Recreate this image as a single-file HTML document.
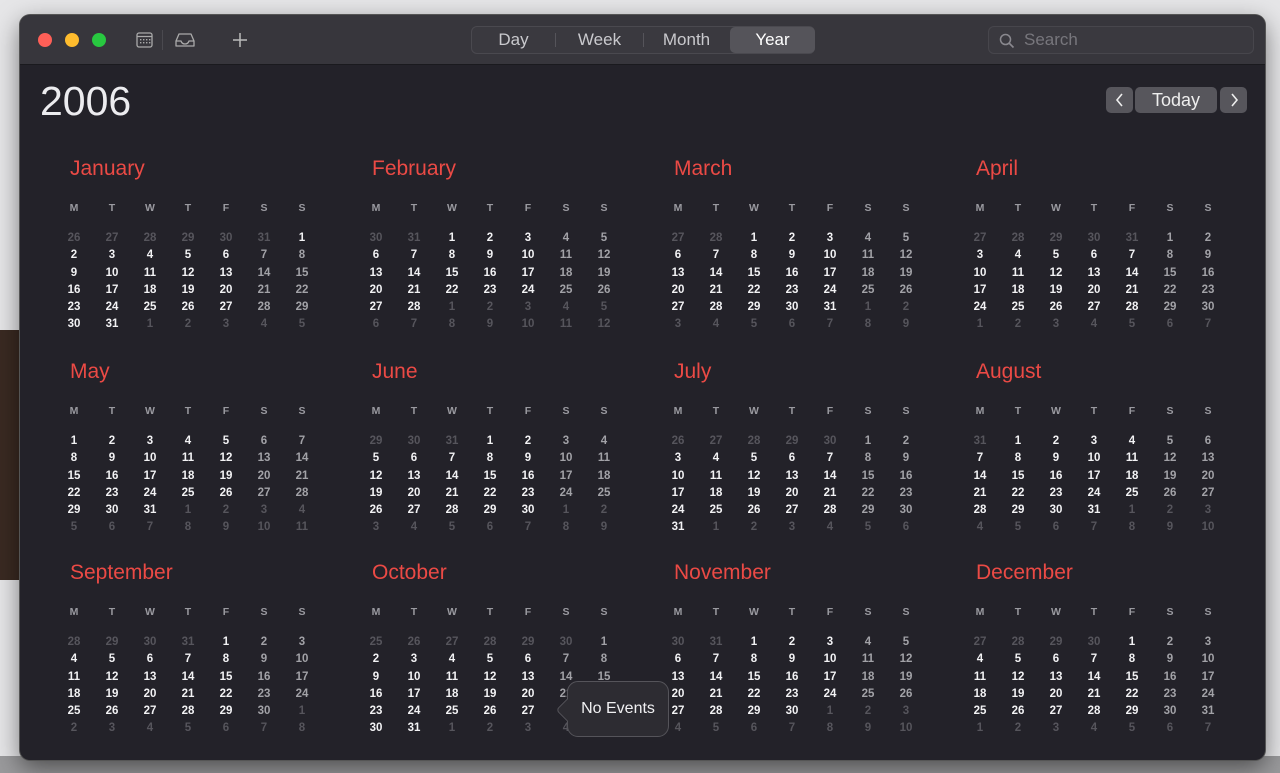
<!DOCTYPE html>
<html><head><meta charset="utf-8"><style>
*{margin:0;padding:0;box-sizing:border-box}
i{font-style:normal}
body{width:1280px;height:773px;overflow:hidden;background:#e6e6e8;font-family:"Liberation Sans",sans-serif;position:relative}
.bot{position:absolute;left:0;top:756px;width:1280px;height:17px;background:#9a9a9c}
.lft{position:absolute;left:0;top:330px;width:20px;height:250px;background:#3a2a22}
.win{position:absolute;left:20px;top:15px;width:1245px;height:745px;background:#232229;border-radius:10px;overflow:hidden;box-shadow:0 0 0 1px #555,0 8px 25px rgba(0,0,0,.5)}
.tb{position:absolute;left:0;top:0;width:1245px;height:50px;background:#37363c;border-bottom:1px solid #1a1a1e}
.dot{position:absolute;top:18px;width:14px;height:14px;border-radius:50%}
.seg{position:absolute;left:451px;top:11px;width:344px;height:28px;border:1px solid #4a494f;border-radius:6px;background:#3a393f}
.seg span{position:absolute;top:0;height:26px;line-height:26px;text-align:center;color:#c9c9cd;font-size:17px}
.srch{position:absolute;left:968px;top:11px;width:266px;height:28px;border:1px solid #47464c;border-radius:6px;background:#3a393f;color:#77767c;font-size:17px;line-height:26px;padding-left:35px}
.yr{position:absolute;left:20px;top:63px;font-size:41px;color:#ececef;font-weight:300}
.nb{position:absolute;top:72px;height:26px;background:#57565c;border-radius:5px;color:#eee;text-align:center;line-height:26px;font-size:18px}
.m{position:absolute;width:266px}
.m h3{font-weight:normal;color:#eb4a45;font-size:21px;padding-left:15px;height:24px;line-height:24px;margin-top:1px}
.g{display:grid;grid-template-columns:repeat(7,38px);text-align:center}
.h{margin-top:21px;color:#9a9aa0;font-size:10.5px;font-weight:bold;height:12px;line-height:12px;margin-bottom:16px}
.d{font-size:11.5px;font-weight:bold;color:#f2f2f4;line-height:17.3px}
.d i:nth-child(7n),.d i:nth-child(7n+6){color:#a2a2a7}
.d i.o{color:#56555c}
.tip{position:absolute;left:547px;top:666px;width:102px;height:56px;background:#2d2c32;border:1px solid #55545a;border-radius:11px;color:#f0f0f2;font-size:16px;line-height:54px;text-align:center}
.arr{position:absolute;left:-9px;top:20px;width:16px;height:16px;background:#2d2c32;border-left:1px solid #55545a;border-bottom:1px solid #55545a;transform:rotate(45deg);border-radius:0 0 0 4px}
</style></head><body>
<div class="lft"></div>
<div class="bot"></div>
<div class="win">
<div class="tb">
<div class="dot" style="left:18px;background:#fe5f57"></div>
<div class="dot" style="left:45px;background:#febc2e"></div>
<div class="dot" style="left:72px;background:#28c840"></div>
<svg style="position:absolute;left:116px;top:17px" width="18" height="16" viewBox="0 0 18 16"><rect x="1" y="1" width="15" height="14" rx="2" fill="none" stroke="#aaa" stroke-width="1.3"/><line x1="1" y1="4.5" x2="16" y2="4.5" stroke="#aaa" stroke-width="1.3"/><g fill="#aaa"><rect x="4" y="7" width="1.4" height="1.4"/><rect x="7" y="7" width="1.4" height="1.4"/><rect x="10" y="7" width="1.4" height="1.4"/><rect x="13" y="7" width="1.4" height="1.4"/><rect x="4" y="10" width="1.4" height="1.4"/><rect x="7" y="10" width="1.4" height="1.4"/><rect x="10" y="10" width="1.4" height="1.4"/><rect x="13" y="10" width="1.4" height="1.4"/></g></svg>
<div style="position:absolute;left:142px;top:15px;width:1px;height:20px;background:#4a494f"></div>
<svg style="position:absolute;left:155px;top:17px" width="20" height="16" viewBox="0 0 20 16"><path d="M1 9 L4 2 H16 L19 9 V14 H1 Z M1 9 H6 Q7 12 10 12 Q13 12 14 9 H19" fill="none" stroke="#aaa" stroke-width="1.3" stroke-linejoin="round"/></svg>
<svg style="position:absolute;left:212px;top:17px" width="16" height="16" viewBox="0 0 16 16"><path d="M8 1V15M1 8H15" stroke="#bbb" stroke-width="1.5"/></svg>
<div class="seg">
<span style="left:0;width:83px">Day</span>
<div style="position:absolute;left:83px;top:6px;width:1px;height:14px;background:#55545a"></div>
<span style="left:84px;width:87px">Week</span>
<div style="position:absolute;left:171px;top:6px;width:1px;height:14px;background:#55545a"></div>
<span style="left:172px;width:85px">Month</span>
<span style="left:258px;width:85px;background:#55545a;border-radius:5px;color:#fff">Year</span>
</div>
<div class="srch">Search<svg style="position:absolute;left:10px;top:6px" width="16" height="16" viewBox="0 0 16 16"><circle cx="6.5" cy="6.5" r="5" fill="none" stroke="#8a898f" stroke-width="1.5"/><path d="M10 10L14.5 14.5" stroke="#8a898f" stroke-width="1.6"/></svg></div>
</div>
<div class="yr">2006</div>
<div class="nb" style="left:1086px;width:27px"><svg width="10" height="14" viewBox="0 0 10 14" style="margin-top:6px"><path d="M7 1L2 7L7 13" fill="none" stroke="#eee" stroke-width="1.6"/></svg></div>
<div class="nb" style="left:1115px;width:82px">Today</div>
<div class="nb" style="left:1200px;width:27px"><svg width="10" height="14" viewBox="0 0 10 14" style="margin-top:6px"><path d="M3 1L8 7L3 13" fill="none" stroke="#eee" stroke-width="1.6"/></svg></div>

<div class="m" style="left:35px;top:141px"><h3>January</h3><div class="g h"><i>M</i><i>T</i><i>W</i><i>T</i><i>F</i><i>S</i><i>S</i></div><div class="g d"><i class="o">26</i><i class="o">27</i><i class="o">28</i><i class="o">29</i><i class="o">30</i><i class="o">31</i><i style="color:#f2f2f4">1</i><i>2</i><i>3</i><i>4</i><i>5</i><i>6</i><i>7</i><i>8</i><i>9</i><i>10</i><i>11</i><i>12</i><i>13</i><i>14</i><i>15</i><i>16</i><i>17</i><i>18</i><i>19</i><i>20</i><i>21</i><i>22</i><i>23</i><i>24</i><i>25</i><i>26</i><i>27</i><i>28</i><i>29</i><i>30</i><i>31</i><i class="o">1</i><i class="o">2</i><i class="o">3</i><i class="o">4</i><i class="o">5</i></div></div>

<div class="m" style="left:337px;top:141px"><h3>February</h3><div class="g h"><i>M</i><i>T</i><i>W</i><i>T</i><i>F</i><i>S</i><i>S</i></div><div class="g d"><i class="o">30</i><i class="o">31</i><i>1</i><i>2</i><i>3</i><i>4</i><i>5</i><i>6</i><i>7</i><i>8</i><i>9</i><i>10</i><i>11</i><i>12</i><i>13</i><i>14</i><i>15</i><i>16</i><i>17</i><i>18</i><i>19</i><i>20</i><i>21</i><i>22</i><i>23</i><i>24</i><i>25</i><i>26</i><i>27</i><i>28</i><i class="o">1</i><i class="o">2</i><i class="o">3</i><i class="o">4</i><i class="o">5</i><i class="o">6</i><i class="o">7</i><i class="o">8</i><i class="o">9</i><i class="o">10</i><i class="o">11</i><i class="o">12</i></div></div>

<div class="m" style="left:639px;top:141px"><h3>March</h3><div class="g h"><i>M</i><i>T</i><i>W</i><i>T</i><i>F</i><i>S</i><i>S</i></div><div class="g d"><i class="o">27</i><i class="o">28</i><i>1</i><i>2</i><i>3</i><i>4</i><i>5</i><i>6</i><i>7</i><i>8</i><i>9</i><i>10</i><i>11</i><i>12</i><i>13</i><i>14</i><i>15</i><i>16</i><i>17</i><i>18</i><i>19</i><i>20</i><i>21</i><i>22</i><i>23</i><i>24</i><i>25</i><i>26</i><i>27</i><i>28</i><i>29</i><i>30</i><i>31</i><i class="o">1</i><i class="o">2</i><i class="o">3</i><i class="o">4</i><i class="o">5</i><i class="o">6</i><i class="o">7</i><i class="o">8</i><i class="o">9</i></div></div>

<div class="m" style="left:941px;top:141px"><h3>April</h3><div class="g h"><i>M</i><i>T</i><i>W</i><i>T</i><i>F</i><i>S</i><i>S</i></div><div class="g d"><i class="o">27</i><i class="o">28</i><i class="o">29</i><i class="o">30</i><i class="o">31</i><i>1</i><i>2</i><i>3</i><i>4</i><i>5</i><i>6</i><i>7</i><i>8</i><i>9</i><i>10</i><i>11</i><i>12</i><i>13</i><i>14</i><i>15</i><i>16</i><i>17</i><i>18</i><i>19</i><i>20</i><i>21</i><i>22</i><i>23</i><i>24</i><i>25</i><i>26</i><i>27</i><i>28</i><i>29</i><i>30</i><i class="o">1</i><i class="o">2</i><i class="o">3</i><i class="o">4</i><i class="o">5</i><i class="o">6</i><i class="o">7</i></div></div>

<div class="m" style="left:35px;top:344px"><h3>May</h3><div class="g h"><i>M</i><i>T</i><i>W</i><i>T</i><i>F</i><i>S</i><i>S</i></div><div class="g d"><i>1</i><i>2</i><i>3</i><i>4</i><i>5</i><i>6</i><i>7</i><i>8</i><i>9</i><i>10</i><i>11</i><i>12</i><i>13</i><i>14</i><i>15</i><i>16</i><i>17</i><i>18</i><i>19</i><i>20</i><i>21</i><i>22</i><i>23</i><i>24</i><i>25</i><i>26</i><i>27</i><i>28</i><i>29</i><i>30</i><i>31</i><i class="o">1</i><i class="o">2</i><i class="o">3</i><i class="o">4</i><i class="o">5</i><i class="o">6</i><i class="o">7</i><i class="o">8</i><i class="o">9</i><i class="o">10</i><i class="o">11</i></div></div>

<div class="m" style="left:337px;top:344px"><h3>June</h3><div class="g h"><i>M</i><i>T</i><i>W</i><i>T</i><i>F</i><i>S</i><i>S</i></div><div class="g d"><i class="o">29</i><i class="o">30</i><i class="o">31</i><i>1</i><i>2</i><i>3</i><i>4</i><i>5</i><i>6</i><i>7</i><i>8</i><i>9</i><i>10</i><i>11</i><i>12</i><i>13</i><i>14</i><i>15</i><i>16</i><i>17</i><i>18</i><i>19</i><i>20</i><i>21</i><i>22</i><i>23</i><i>24</i><i>25</i><i>26</i><i>27</i><i>28</i><i>29</i><i>30</i><i class="o">1</i><i class="o">2</i><i class="o">3</i><i class="o">4</i><i class="o">5</i><i class="o">6</i><i class="o">7</i><i class="o">8</i><i class="o">9</i></div></div>

<div class="m" style="left:639px;top:344px"><h3>July</h3><div class="g h"><i>M</i><i>T</i><i>W</i><i>T</i><i>F</i><i>S</i><i>S</i></div><div class="g d"><i class="o">26</i><i class="o">27</i><i class="o">28</i><i class="o">29</i><i class="o">30</i><i>1</i><i>2</i><i>3</i><i>4</i><i>5</i><i>6</i><i>7</i><i>8</i><i>9</i><i>10</i><i>11</i><i>12</i><i>13</i><i>14</i><i>15</i><i>16</i><i>17</i><i>18</i><i>19</i><i>20</i><i>21</i><i>22</i><i>23</i><i>24</i><i>25</i><i>26</i><i>27</i><i>28</i><i>29</i><i>30</i><i>31</i><i class="o">1</i><i class="o">2</i><i class="o">3</i><i class="o">4</i><i class="o">5</i><i class="o">6</i></div></div>

<div class="m" style="left:941px;top:344px"><h3>August</h3><div class="g h"><i>M</i><i>T</i><i>W</i><i>T</i><i>F</i><i>S</i><i>S</i></div><div class="g d"><i class="o">31</i><i>1</i><i>2</i><i>3</i><i>4</i><i>5</i><i>6</i><i>7</i><i>8</i><i>9</i><i>10</i><i>11</i><i>12</i><i>13</i><i>14</i><i>15</i><i>16</i><i>17</i><i>18</i><i>19</i><i>20</i><i>21</i><i>22</i><i>23</i><i>24</i><i>25</i><i>26</i><i>27</i><i>28</i><i>29</i><i>30</i><i>31</i><i class="o">1</i><i class="o">2</i><i class="o">3</i><i class="o">4</i><i class="o">5</i><i class="o">6</i><i class="o">7</i><i class="o">8</i><i class="o">9</i><i class="o">10</i></div></div>

<div class="m" style="left:35px;top:545px"><h3>September</h3><div class="g h"><i>M</i><i>T</i><i>W</i><i>T</i><i>F</i><i>S</i><i>S</i></div><div class="g d"><i class="o">28</i><i class="o">29</i><i class="o">30</i><i class="o">31</i><i>1</i><i>2</i><i>3</i><i>4</i><i>5</i><i>6</i><i>7</i><i>8</i><i>9</i><i>10</i><i>11</i><i>12</i><i>13</i><i>14</i><i>15</i><i>16</i><i>17</i><i>18</i><i>19</i><i>20</i><i>21</i><i>22</i><i>23</i><i>24</i><i>25</i><i>26</i><i>27</i><i>28</i><i>29</i><i>30</i><i class="o">1</i><i class="o">2</i><i class="o">3</i><i class="o">4</i><i class="o">5</i><i class="o">6</i><i class="o">7</i><i class="o">8</i></div></div>

<div class="m" style="left:337px;top:545px"><h3>October</h3><div class="g h"><i>M</i><i>T</i><i>W</i><i>T</i><i>F</i><i>S</i><i>S</i></div><div class="g d"><i class="o">25</i><i class="o">26</i><i class="o">27</i><i class="o">28</i><i class="o">29</i><i class="o">30</i><i>1</i><i>2</i><i>3</i><i>4</i><i>5</i><i>6</i><i>7</i><i>8</i><i>9</i><i>10</i><i>11</i><i>12</i><i>13</i><i>14</i><i>15</i><i>16</i><i>17</i><i>18</i><i>19</i><i>20</i><i>21</i><i>22</i><i>23</i><i>24</i><i>25</i><i>26</i><i>27</i><i>28</i><i>29</i><i>30</i><i>31</i><i class="o">1</i><i class="o">2</i><i class="o">3</i><i class="o">4</i><i class="o">5</i></div></div>

<div class="m" style="left:639px;top:545px"><h3>November</h3><div class="g h"><i>M</i><i>T</i><i>W</i><i>T</i><i>F</i><i>S</i><i>S</i></div><div class="g d"><i class="o">30</i><i class="o">31</i><i>1</i><i>2</i><i>3</i><i>4</i><i>5</i><i>6</i><i>7</i><i>8</i><i>9</i><i>10</i><i>11</i><i>12</i><i>13</i><i>14</i><i>15</i><i>16</i><i>17</i><i>18</i><i>19</i><i>20</i><i>21</i><i>22</i><i>23</i><i>24</i><i>25</i><i>26</i><i>27</i><i>28</i><i>29</i><i>30</i><i class="o">1</i><i class="o">2</i><i class="o">3</i><i class="o">4</i><i class="o">5</i><i class="o">6</i><i class="o">7</i><i class="o">8</i><i class="o">9</i><i class="o">10</i></div></div>

<div class="m" style="left:941px;top:545px"><h3>December</h3><div class="g h"><i>M</i><i>T</i><i>W</i><i>T</i><i>F</i><i>S</i><i>S</i></div><div class="g d"><i class="o">27</i><i class="o">28</i><i class="o">29</i><i class="o">30</i><i>1</i><i>2</i><i>3</i><i>4</i><i>5</i><i>6</i><i>7</i><i>8</i><i>9</i><i>10</i><i>11</i><i>12</i><i>13</i><i>14</i><i>15</i><i>16</i><i>17</i><i>18</i><i>19</i><i>20</i><i>21</i><i>22</i><i>23</i><i>24</i><i>25</i><i>26</i><i>27</i><i>28</i><i>29</i><i>30</i><i>31</i><i class="o">1</i><i class="o">2</i><i class="o">3</i><i class="o">4</i><i class="o">5</i><i class="o">6</i><i class="o">7</i></div></div>

<div class="tip"><div class="arr"></div><span style="position:relative">No Events</span></div>
</div>
</body></html>
